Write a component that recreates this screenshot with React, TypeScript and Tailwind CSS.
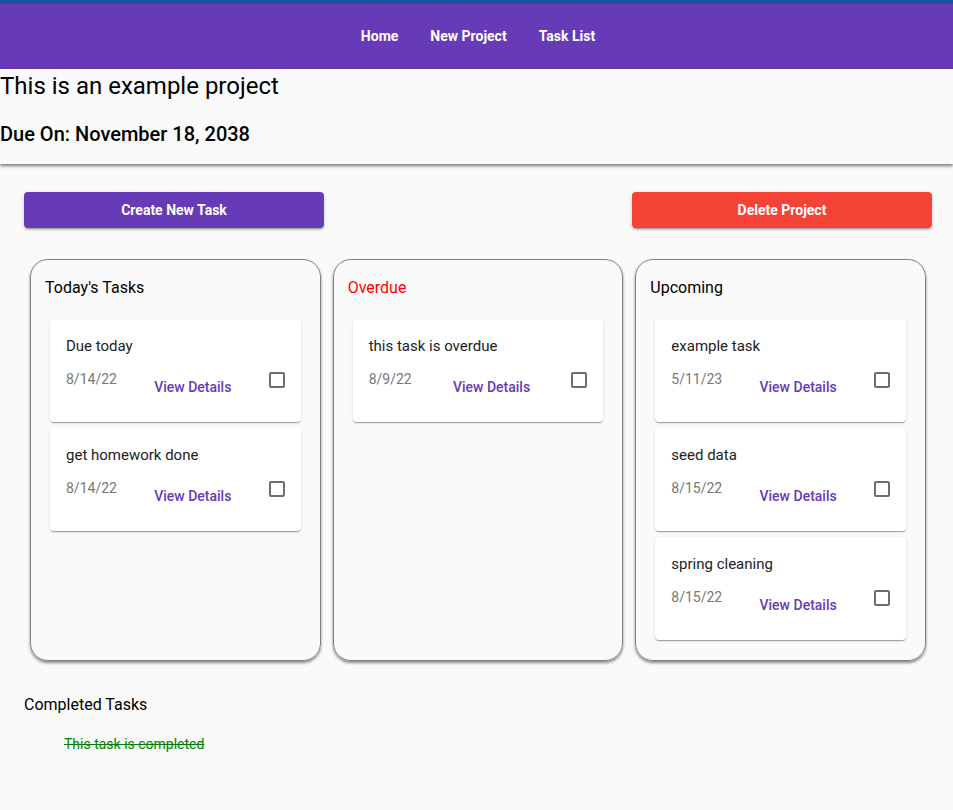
import React from "react";

type Task = { title: string; date: string };

const COLUMNS: { title: string; red?: boolean; tasks: Task[] }[] = [
  {
    title: "Today's Tasks",
    tasks: [
      { title: "Due today", date: "8/14/22" },
      { title: "get homework done", date: "8/14/22" },
    ],
  },
  {
    title: "Overdue",
    red: true,
    tasks: [{ title: "this task is overdue", date: "8/9/22" }],
  },
  {
    title: "Upcoming",
    tasks: [
      { title: "example task", date: "5/11/23" },
      { title: "seed data", date: "8/15/22" },
      { title: "spring cleaning", date: "8/15/22" },
    ],
  },
];

function TaskCard({ task }: { task: Task }) {
  return (
    <div className="rounded bg-white px-4 pt-4 pb-[17px] shadow-[0_2px_1px_-1px_rgba(0,0,0,0.2),0_1px_1px_0_rgba(0,0,0,0.14),0_1px_3px_0_rgba(0,0,0,0.12)]">
      <p className="text-[15px] leading-[22px] text-[#222]">{task.title}</p>
      <div className="mt-3 flex h-9 items-start justify-between">
        <span className="text-sm leading-5 text-[#777]">{task.date}</span>
        <button className="h-9 rounded px-2 text-sm font-medium text-[#673ab7]">
          View Details
        </button>
        <span className="mt-[3px] h-4 w-4 rounded-[2px] border-2 border-[#6e6e6e]" />
      </div>
    </div>
  );
}

export default function App() {
  return (
    <div className="min-h-[810px] bg-[#fafafa] font-['Roboto',sans-serif] text-black">
      <div className="h-1 bg-[#1a52a0]" />
      <nav className="flex h-[65px] items-center justify-center gap-8 pb-[2px] pl-[3px] bg-[#673ab7] text-sm font-bold text-white">
        <a>Home</a>
        <a>New Project</a>
        <a>Task List</a>
      </nav>

      <header className="bg-[#fafafa] pt-px pb-4 shadow-[0_2px_3px_rgba(0,0,0,0.5)]">
        <h1 className="text-[24px] leading-8">This is an example project</h1>
        <h2 className="mt-[18px] text-[20px] font-medium leading-7">
          Due On: November 18, 2038
        </h2>
      </header>

      <div className="mt-7 flex justify-between pl-6 pr-[21px]">
        <button className="h-9 w-[300px] rounded bg-[#673ab7] text-sm font-bold text-white shadow-[0_3px_1px_-2px_rgba(0,0,0,0.2),0_2px_2px_0_rgba(0,0,0,0.14),0_1px_5px_0_rgba(0,0,0,0.12)]">
          Create New Task
        </button>
        <button className="h-9 w-[300px] rounded bg-[#f44336] text-sm font-bold text-white shadow-[0_3px_1px_-2px_rgba(0,0,0,0.2),0_2px_2px_0_rgba(0,0,0,0.14),0_1px_5px_0_rgba(0,0,0,0.12)]">
          Delete Project
        </button>
      </div>

      <div className="mt-[31px] grid grid-cols-3 gap-3 pl-[30px] pr-[27px]">
        {COLUMNS.map((col) => (
          <section
            key={col.title}
            className="h-[402px] rounded-[18px] border border-[#808080] px-[19px] pt-4 shadow-[0_2px_3px_rgba(0,0,0,0.45)]"
          >
            <h3
              className={`-ml-[5px] text-base leading-6 ${
                col.red ? "text-[#ff0000]" : "text-black"
              }`}
            >
              {col.title}
            </h3>
            <div className="mt-[19px] flex flex-col gap-[6px]">
              {col.tasks.map((t) => (
                <TaskCard key={t.title} task={t} />
              ))}
            </div>
          </section>
        ))}
      </div>

      <div className="mt-8 pl-6">
        <h3 className="text-base leading-6">Completed Tasks</h3>
        <ul className="mt-[17px] pl-10">
          <li className="text-sm leading-5 text-[#008000] line-through">
            This task is completed
          </li>
        </ul>
      </div>
    </div>
  );
}
